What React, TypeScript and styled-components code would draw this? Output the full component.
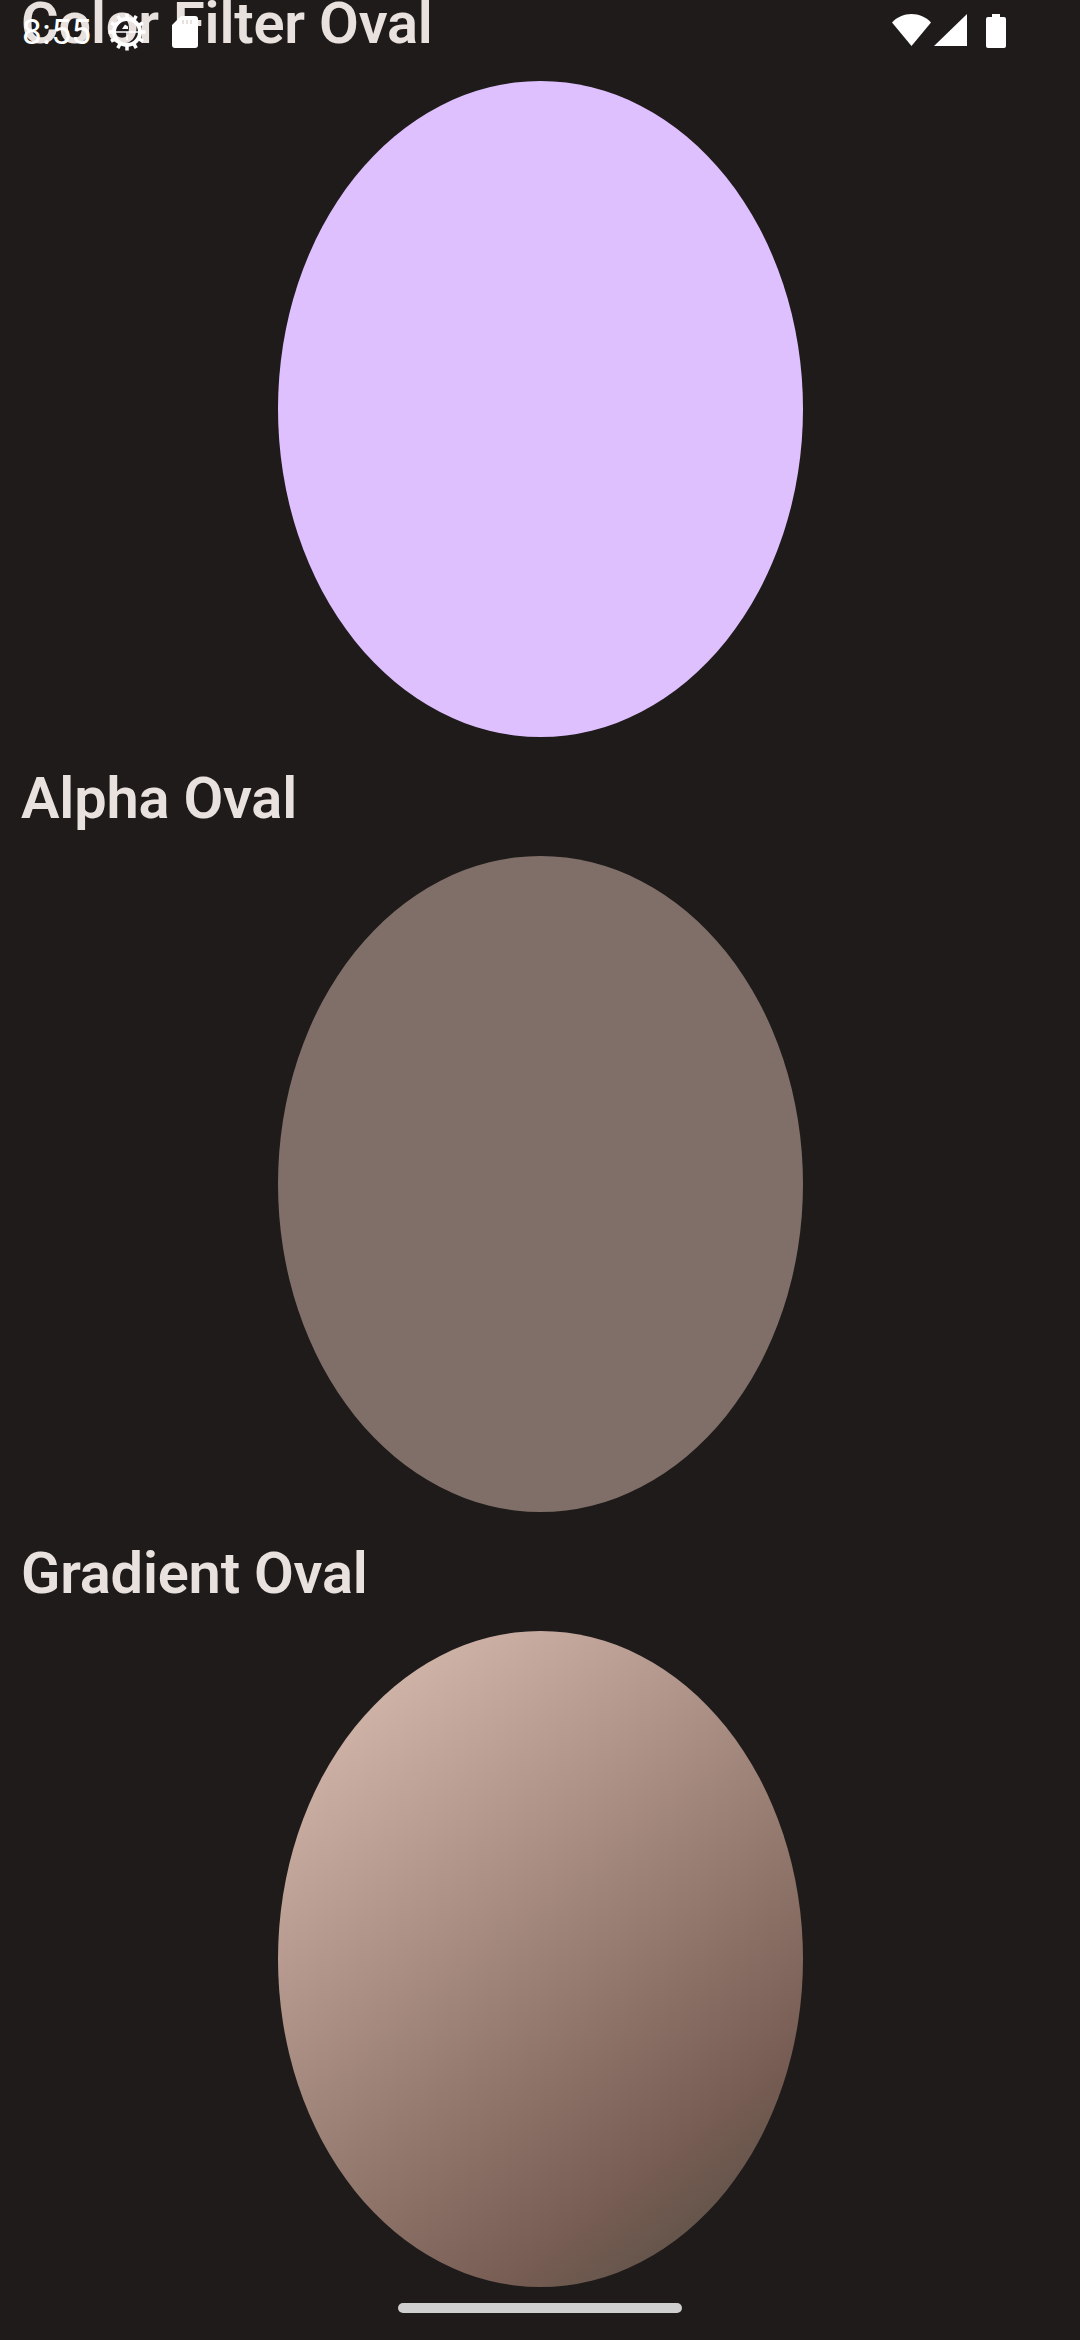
import React, { FC } from 'react';
import styled, { createGlobalStyle } from 'styled-components';

const GlobalStyle = createGlobalStyle`
  html, body {
    margin: 0;
    padding: 0;
    background: #1e1b1a;
  }
`;

const Screen = styled.div`
  position: relative;
  width: 1080px;
  height: 2340px;
  overflow: hidden;
  background: #1e1b1a;
  font-family: Roboto, "Noto Sans", sans-serif;
`;

// the list is scrolled a little, so the first heading goes under the status bar
const ScrollContent = styled.div`
  display: flex;
  flex-direction: column;
  margin-top: -38px;
`;

const Section = styled.section`
  display: flex;
  flex-direction: column;
`;

const Heading = styled.h2`
  height: 119px;
  margin: 0;
  padding: 2px 21px 0;
  box-sizing: border-box;
  display: flex;
  align-items: center;
  font-size: 57.75px;
  font-weight: 600;
  letter-spacing: -0.2px;
  color: #e8e1de;
`;

const Oval = styled.div<{ $fill: string }>`
  width: 525px;
  height: 656px;
  align-self: center;
  border-radius: 50%;
  background: ${({ $fill }) => $fill};
`;

const StatusBar = styled.div`
  position: absolute;
  top: 0;
  left: 0;
  right: 0;
  height: 64px;
  padding: 0 74px 0 22px;
  box-sizing: border-box;
  display: flex;
  align-items: center;
  justify-content: space-between;
  color: #fff;
`;

const StatusGroup = styled.div`
  display: flex;
  align-items: center;
`;

const SystemIcons = styled(StatusGroup)`
  align-items: flex-start;
  padding-bottom: 2px;
`;

const Time = styled.span`
  width: 68px;
  font-size: 35px;
  line-height: 1;
  letter-spacing: 0.5px;
  margin-right: 18px;
`;

const GesturePill = styled.div`
  position: absolute;
  left: 398px;
  bottom: 27px;
  width: 284px;
  height: 10px;
  border-radius: 5px;
  background: #cfcfcf;
`;

const toothAngles = Array.from({ length: 12 }, (_, i) => i * 30);

const GearIcon: FC = () => (
  <svg width="38" height="38" viewBox="0 0 38 38" fill="#fff">
    <circle cx="19" cy="19" r="13" fill="none" stroke="#fff" strokeWidth="4" />
    {toothAngles.map((a) => (
      <rect key={a} x="17.250" y="0.500" width="3.500" height="5" transform={`rotate(${a} 19 19)`} />
    ))}
    <rect x="7" y="18.250" width="24" height="1.500" />
    <rect x="18.250" y="19" width="1.500" height="8" />
    <path d="M14 16h6v-2.500l-3-2z" />
  </svg>
);

const SdCardIcon: FC = () => (
  <svg width="26" height="32" viewBox="0 0 26 32" fill="#fff" style={{ marginLeft: 26 }}>
    <path
      fillRule="evenodd"
      d="M9 0h14a3 3 0 0 1 3 3v26a3 3 0 0 1-3 3H3a3 3 0 0 1-3-3V9zM10 4v4h2V4zM14 4v4h2V4zM18 4v4h2V4z"
    />
  </svg>
);

const WifiIcon: FC = () => (
  <svg width="39" height="32" viewBox="0 0 39 32" fill="#fff">
    <path d="M0 8.500C5 3 12 0 19.500 0S34 3 39 8.500L19.500 32z" />
  </svg>
);

const CellIcon: FC = () => (
  <svg width="33" height="32" viewBox="0 0 33 32" fill="#fff" style={{ marginLeft: 3 }}>
    <path d="M33 0v32H0z" />
  </svg>
);

const BatteryIcon: FC = () => (
  <svg width="20" height="34" viewBox="0 0 20 34" fill="#fff" style={{ marginLeft: 19 }}>
    <path d="M6 0h8v3h4a2 2 0 0 1 2 2v27a2 2 0 0 1-2 2H2a2 2 0 0 1-2-2V5a2 2 0 0 1 2-2h4z" />
  </svg>
);

const sections = [
  { title: 'Color Filter Oval', fill: '#dfc0ff' },
  { title: 'Alpha Oval', fill: '#7f6f68' },
  {
    title: 'Gradient Oval',
    fill: 'linear-gradient(141.3deg, #e1c4b8 0%, #765c52 78%, #4a493f 100%)',
  },
];

const App: FC = () => (
  <Screen>
    <GlobalStyle />
    <ScrollContent>
      {sections.map((s) => (
        <Section key={s.title}>
          <Heading>{s.title}</Heading>
          <Oval $fill={s.fill} />
        </Section>
      ))}
    </ScrollContent>
    <StatusBar>
      <StatusGroup>
        <Time>8:55</Time>
        <GearIcon />
        <SdCardIcon />
      </StatusGroup>
      <SystemIcons>
        <WifiIcon />
        <CellIcon />
        <BatteryIcon />
      </SystemIcons>
    </StatusBar>
    <GesturePill />
  </Screen>
);

export default App;
